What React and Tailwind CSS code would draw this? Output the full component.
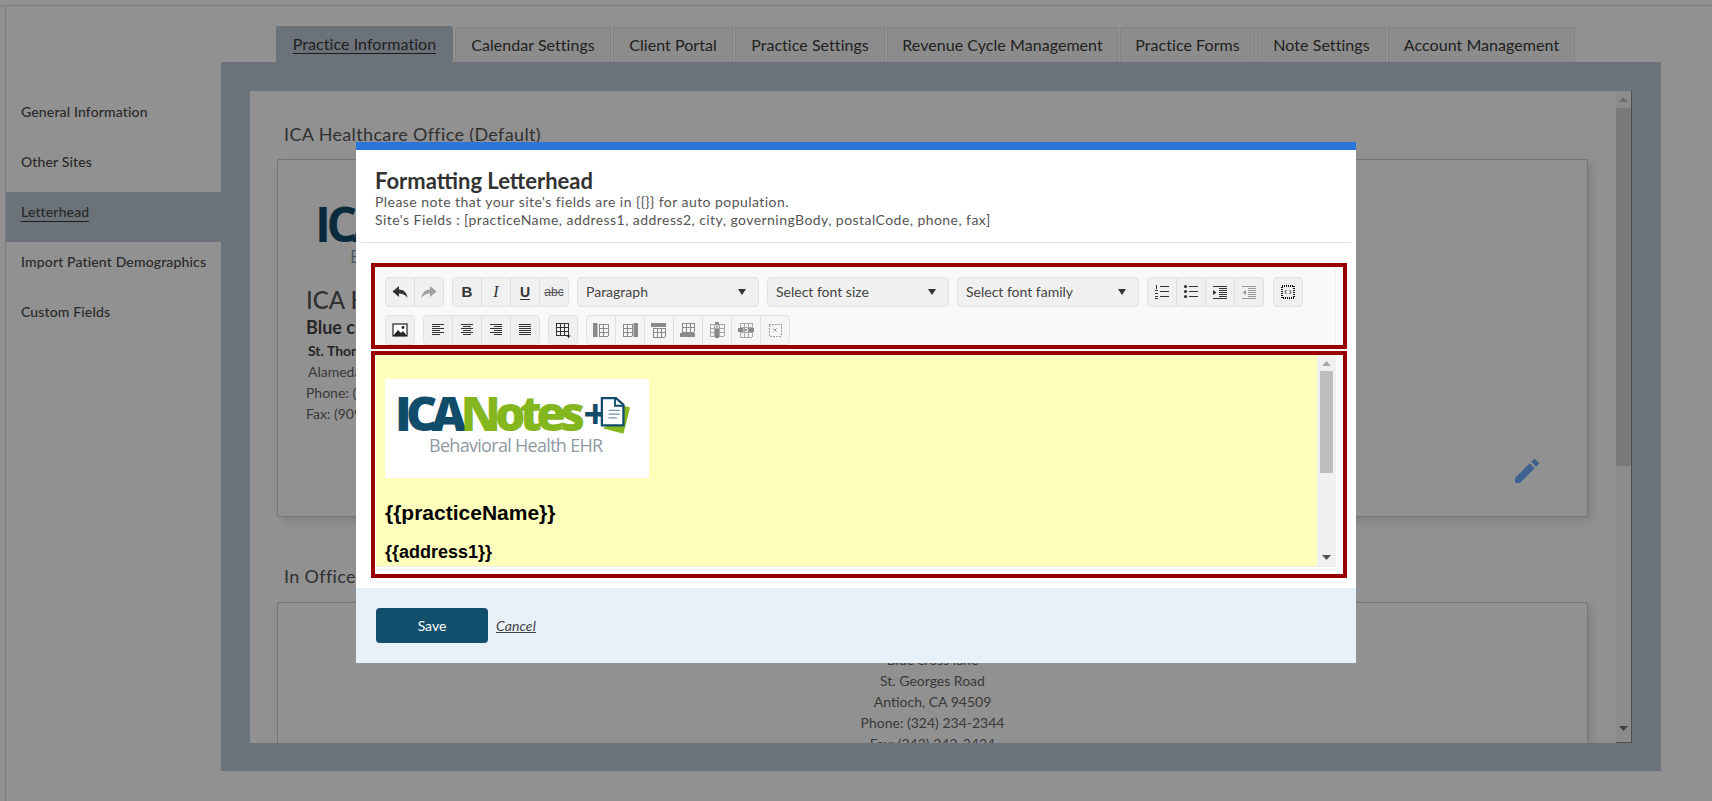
import React from "react";

const Grid = ({ x, y, w, h, cols, rows, color = "#8a8a8a" }) => {
  const lines = [];
  for (let i = 0; i <= cols; i++) lines.push(<line key={"c" + i} x1={x + (w * i) / cols} x2={x + (w * i) / cols} y1={y} y2={y + h} />);
  for (let i = 0; i <= rows; i++) lines.push(<line key={"r" + i} y1={y + (h * i) / rows} y2={y + (h * i) / rows} x1={x} x2={x + w} />);
  return <g stroke={color} strokeWidth="1" fill="none" shapeRendering="crispEdges">{lines}</g>;
};

const S = ({ children }) => <svg width="16" height="16" viewBox="0 0 16 16">{children}</svg>;
const Lines = ({ rows, color = "#333" }) => (
  <S>
    {rows.map(([x, w], i) => <rect key={i} x={x} y={2 + i * 2} width={w} height="1" fill={color} />)}
  </S>
);

const AlignLeft = () => <Lines rows={[[2, 12], [2, 8], [2, 12], [2, 8], [2, 12], [2, 8]]} />;
const AlignCenter = () => <Lines rows={[[2, 12], [4, 8], [2, 12], [4, 8], [2, 12], [4, 8]]} />;
const AlignRight = () => <Lines rows={[[2, 12], [6, 8], [2, 12], [6, 8], [2, 12], [6, 8]]} />;
const AlignJustify = () => <Lines rows={[[2, 12], [2, 12], [2, 12], [2, 12], [2, 12], [2, 12]]} />;

const Undo = () => <S><path d="M7 2 .5 7.5 7 13V9.5c3.5 0 6 1 8.5 4.5C15 9 12 5.5 7 5.5z" fill="#333" /></S>;
const Redo = () => <S><path d="M9 2l6.5 5.5L9 13V9.5c-3.5 0-6 1-8.5 4.5C1 9 4 5.5 9 5.5z" fill="#a0a0a0" /></S>;

const NumList = () => (
  <S>
    <rect x="6" y="2" width="9" height="1" fill="#333" />
    <rect x="6" y="7" width="9" height="1" fill="#333" />
    <rect x="6" y="12" width="9" height="1" fill="#333" />
    <rect x="2" y="1" width="1" height="4" fill="#333" />
    <rect x="1" y="6" width="3" height="1" fill="#333" />
    <rect x="1" y="9" width="3" height="1" fill="#333" />
    <rect x="1" y="12" width="3" height="1" fill="#333" />
    <rect x="1" y="14" width="3" height="1" fill="#333" />
  </S>
);
const BulList = () => (
  <S>
    <rect x="6" y="2" width="9" height="1" fill="#333" />
    <rect x="6" y="7" width="9" height="1" fill="#333" />
    <rect x="6" y="12" width="9" height="1" fill="#333" />
    <circle cx="2.5" cy="2.5" r="1.6" fill="#333" />
    <circle cx="2.5" cy="7.5" r="1.6" fill="#333" />
    <circle cx="2.5" cy="12.5" r="1.6" fill="#333" />
  </S>
);
const Indent = ({ color = "#333", flip = false }) => (
  <S>
    <rect x="1" y="2" width="14" height="1" fill={color} />
    <rect x="7" y="4" width="8" height="1" fill={color} />
    <rect x="7" y="6" width="8" height="1" fill={color} />
    <rect x="7" y="8" width="8" height="1" fill={color} />
    <rect x="7" y="10" width="8" height="1" fill={color} />
    <rect x="7" y="12" width="8" height="1" fill={color} />
    <rect x="1" y="14" width="14" height="1" fill={color} />
    <polygon points={flip ? "5,6 5,11 1.5,8.5" : "1,6 1,11 4.5,8.5"} fill={color} />
  </S>
);
const Code = () => (
  <S>
    <rect x="2" y="2" width="12" height="12" fill="none" stroke="#111" strokeWidth="2" strokeDasharray="1 1" shapeRendering="crispEdges" />
    <path d="M6.5 6 4.8 8l1.7 2M9.5 6l1.7 2-1.7 2" fill="none" stroke="#444" strokeWidth="1" />
  </S>
);
const Picture = () => (
  <S>
    <rect x="1" y="2" width="14" height="12" fill="#fff" stroke="#222" strokeWidth="1.2" />
    <path d="M1 14 6 8l3 3 2-2 4 5z" fill="#222" />
    <circle cx="11" cy="5.5" r="1.4" fill="#222" />
  </S>
);
const TablePlus = () => (
  <S>
    <Grid x={1} y={1} w={12} h={12} cols={3} rows={3} color="#333" />
    <path d="M13.5 12v4M11.5 14h4" stroke="#222" strokeWidth="1" />
  </S>
);
const Mark = ({ x, y }) => <path d={`M${x} ${y}l3 3M${x + 3} ${y}l-3 3`} stroke="#999" strokeWidth="1" />;
const T1 = () => <S><rect x="0" y="1" width="4.5" height="14" fill="#8a8a8a" /><Grid x={6} y={2} w={9} h={12} cols={2} rows={3} /></S>;
const T2 = () => <S><Grid x={1} y={2} w={9} h={12} cols={2} rows={3} /><rect x="11.5" y="1" width="4.5" height="14" fill="#8a8a8a" /></S>;
const T3 = () => <S><rect x="0" y="1" width="15" height="4" fill="#8a8a8a" /><Grid x={2} y={6} w={12} h={9} cols={3} rows={2} /></S>;
const T4 = () => <S><Grid x={2} y={1} w={12} h={9} cols={3} rows={2} /><rect x="0" y="11" width="15" height="4" fill="#8a8a8a" /></S>;
const T5 = () => <S><Grid x={1} y={2} w={14} h={12} cols={3} rows={3} color="#a8a8a8" /><rect x="6" y="7" width="4" height="9" fill="#8a8a8a" /><rect x="6" y="0" width="4" height="2.5" fill="#8a8a8a" /><Mark x={6.5} y={3} /></S>;
const T6 = () => <S><Grid x={2} y={1} w={12} h={14} cols={3} rows={3} color="#a8a8a8" /><rect x="0" y="6" width="5.5" height="4" fill="#8a8a8a" /><rect x="10.5" y="6" width="5.5" height="4" fill="#8a8a8a" /><Mark x={6.5} y={6.5} /></S>;
const T7 = () => <S><rect x="2" y="2" width="12" height="12" fill="none" stroke="#a0a0a0" strokeDasharray="2 1" shapeRendering="crispEdges" /><Mark x={6.5} y={6.5} /></S>;

const Btn = ({ children, last, className = "" }) => (
  <div className={`flex h-full items-center justify-center ${last ? "w-[28px]" : "w-[29px] border-r border-[#e0e0e0]"} ${className}`}>{children}</div>
);
const Group = ({ children, className = "" }) => (
  <div className={`flex h-[30px] items-stretch rounded-[4px] border border-[#e2e2e2] bg-[#f0f0f0] ${className}`}>{children}</div>
);
const Select = ({ label, width }) => (
  <div className={`flex h-[30px] items-center justify-between rounded-[4px] border border-[#e2e2e2] bg-[#f0f0f0] pl-[8px] pr-[12px] text-[14px] text-[#444] ${width}`}>
    <span className="pb-[2px]">{label}</span>
    <svg width="8" height="6" viewBox="0 0 8 6"><polygon points="0,0 8,0 4,6" fill="#333" /></svg>
  </div>
);

const Tab = ({ label, width, active }) => (
  <div className={`flex items-center justify-center rounded-t-[2px] text-[16px] tracking-[0.05px] ${width} ${active ? "h-[36px] bg-[#bcc8d6] text-[#3a3a3a]" : "mt-[1px] h-[35px] border border-b-0 border-[#e6e6e6] bg-[#f6f6f6] text-[#3a3a3a]"}`}>
    <span className={active ? "border-b border-[#333] leading-[19px]" : ""}>{label}</span>
  </div>
);

const SideItem = ({ label, active }) => (
  <div className={`flex h-[50px] items-center pb-[10px] pl-[15px] text-[14px] font-medium tracking-[0.15px] text-[#4a4a4a] ${active ? "bg-[#bcc8d6]" : ""}`}>
    <span className={`border-b leading-[19px] ${active ? "border-[#333]" : "border-transparent"}`}>{label}</span>
  </div>
);

const LogoMark = () => (
  <svg width="30" height="38" viewBox="0 0 32 40" className="-ml-[7px] mt-[6px] shrink-0">
    <polygon points="22,8 32,11 25,39 3,33 8,30" fill="#84b61e" />
    <path d="M2 1h15l8 7v22H2z" fill="#fff" stroke="#114c6b" strokeWidth="2.4" />
    <path d="M16 1v8h9" fill="none" stroke="#114c6b" strokeWidth="2" />
    <path d="M9 14h12M9 18h12M9 22h9" stroke="#6f94ad" strokeWidth="1.4" />
  </svg>
);

export default function App() {
  return (
    <div className="relative h-[801px] w-[1712px] overflow-hidden bg-white font-['Lato',sans-serif]">
      <div className="mt-[5px] h-[796px] border-t border-[#dcdcdc]">
        <div className="ml-[5px] flex h-full border-l border-[#dcdcdc]">
          <aside className="w-[215px] shrink-0 pt-[86px]">
            <SideItem label="General Information" />
            <SideItem label="Other Sites" />
            <SideItem label="Letterhead" active />
            <SideItem label="Import Patient Demographics" />
            <SideItem label="Custom Fields" />
          </aside>
          <main className="w-[1440px] shrink-0 pt-[20px]">
            <nav className="ml-[55px] flex h-[36px] gap-[2px]">
              <Tab label="Practice Information" width="w-[177px]" active />
              <Tab label="Calendar Settings" width="w-[156px]" />
              <Tab label="Client Portal" width="w-[120px]" />
              <Tab label="Practice Settings" width="w-[150px]" />
              <Tab label="Revenue Cycle Management" width="w-[231px]" />
              <Tab label="Practice Forms" width="w-[135px]" />
              <Tab label="Note Settings" width="w-[129px]" />
              <Tab label="Account Management" width="w-[187px]" />
            </nav>
            <section className="h-[709px] bg-[#bcc8d6] p-[29px] pb-[28px]">
              <div className="flex h-[652px] bg-white">
                <div className="h-full w-[1366px] overflow-hidden">
                  <div className="pl-[34px] pt-[32px] text-[18px] leading-[22px] tracking-[0.35px] text-[#555]">ICA Healthcare Office (Default)</div>
                  <div className="ml-[27px] mt-[14px] flex h-[358px] w-[1311px] rounded-[2px] border border-[#d0d0d0] shadow-[4px_4px_8px_rgba(0,0,0,0.12)]">
                    <div className="w-[330px] pl-[28px] pt-[36px] text-[14px] leading-[21px] text-[#666]">
                      <div className="pl-[9px] font-['Open_Sans',sans-serif] text-[48px] font-bold leading-[56px] tracking-[-4.5px] text-[#114c6b]">ICA</div>
                      <div className="-mt-[8px] pl-[44px] font-['Open_Sans',sans-serif] text-[18px] leading-[24px] text-[#8e9aa3]">Behavioral</div>
                      <div className="mt-[17px] text-[24px] font-medium leading-[30px] text-[#555]">ICA Healthcare</div>
                      <div className="text-[18px] font-bold leading-[24px] text-[#444]">Blue cross lane</div>
                      <div className="mt-[1px] pl-[2px] font-bold leading-[21px] text-[#444]">St. Thomas Road</div>
                      <div className="pl-[2px]">Alameda, CA</div>
                      <div>Phone: (909) 234-2344</div>
                      <div>Fax: (909) 242-2424</div>
                    </div>
                    <div className="flex flex-1 items-end justify-end pb-[29px] pr-[44px]">
                      <svg width="32" height="32" viewBox="0 0 24 24" fill="#6eaefc">
                        <path d="M3 17.25V21h3.75L17.81 9.94l-3.75-3.75L3 17.25zM20.71 7.04a1 1 0 0 0 0-1.41l-2.34-2.34a1 1 0 0 0-1.41 0l-1.83 1.83 3.75 3.75 1.83-1.83z" />
                      </svg>
                    </div>
                  </div>
                  <div className="pl-[34px] pt-[48px] text-[18px] leading-[22px] tracking-[0.35px] text-[#555]">In Office</div>
                  <div className="ml-[27px] mt-[15px] h-[400px] w-[1311px] rounded-[2px] border border-[#d0d0d0] pt-[46px] text-center text-[14px] leading-[21px] text-[#666] shadow-[4px_4px_8px_rgba(0,0,0,0.12)]">
                    <div>Blue cross lane</div>
                    <div>St. Georges Road</div>
                    <div>Antioch, CA 94509</div>
                    <div>Phone: (324) 234-2344</div>
                    <div>Fax: (242) 242-2424</div>
                  </div>
                </div>
                <div className="flex h-full w-[16px] flex-col items-center border-b border-r border-[#8a8a8a] bg-[#f6f6f6]">
                  <div className="h-[17px] pt-[6px]"><svg width="9" height="5" viewBox="0 0 9 5" className="block"><polygon points="4.5,0 9,5 0,5" fill="#c0c0c0" /></svg></div>
                  <div className="h-[358px] w-[15px] bg-[#d6d6d6]" />
                  <div className="flex-1" />
                  <div className="h-[16px]"><svg width="9" height="5" viewBox="0 0 9 5" className="block"><polygon points="0,0 9,0 4.5,5" fill="#707070" /></svg></div>
                </div>
              </div>
            </section>
          </main>
        </div>
      </div>

      <div className="absolute inset-0 flex justify-center bg-black/[0.43]">
        <div className="mt-[142px] h-[521px] w-[1000px] bg-white">
          <div className="h-[8px] bg-[#2b74db]" />
          <div className="mx-[5px] h-[93px] border-b border-[#dfdfdf] pl-[14px] pt-[18px]">
            <h2 className="text-[22px] font-bold leading-[25px] text-[#333]">Formatting Letterhead</h2>
            <p className="text-[14px] leading-[18px] tracking-[0.45px] text-[#555]">Please note that your site's fields are in {"{{}}"} for auto population.</p>
            <p className="text-[14px] leading-[18px] tracking-[0.45px] text-[#555]">Site's Fields : [practiceName, address1, address2, city, governingBody, postalCode, phone, fax]</p>
          </div>

          <div className="ml-[15px] mt-[20px] h-[86px] w-[976px] border-4 border-[#990000] bg-white pl-[1px] pr-[7px]">
            <div className="h-full border-r border-[#eeeeee] bg-[#f9f9f9] pl-[9px] pt-[10px]">
              <div className="flex h-[30px] gap-[8px]">
                <Group><Btn><Undo /></Btn><Btn last><Redo /></Btn></Group>
                <Group>
                  <Btn><span className="font-['Liberation_Sans',sans-serif] text-[15px] font-bold text-[#333]">B</span></Btn>
                  <Btn><span className="font-['Liberation_Serif',serif] text-[16px] italic text-[#333]">I</span></Btn>
                  <Btn><span className="border-b-[1.5px] border-[#333] font-['Liberation_Sans',sans-serif] text-[14px] font-bold leading-[14px] text-[#333]">U</span></Btn>
                  <Btn last><span className="font-['Liberation_Sans',sans-serif] text-[12px] text-[#555] line-through">abc</span></Btn>
                </Group>
                <Select label="Paragraph" width="w-[182px]" />
                <Select label="Select font size" width="w-[182px]" />
                <Select label="Select font family" width="w-[182px]" />
                <Group>
                  <Btn><NumList /></Btn><Btn><BulList /></Btn><Btn><Indent /></Btn><Btn last><Indent color="#999" flip /></Btn>
                </Group>
                <Group className="ml-[1px]"><Btn last><Code /></Btn></Group>
              </div>
              <div className="mt-[8px] flex h-[30px] gap-[8px]">
                <Group><Btn last><Picture /></Btn></Group>
                <Group><Btn><AlignLeft /></Btn><Btn><AlignCenter /></Btn><Btn><AlignRight /></Btn><Btn last><AlignJustify /></Btn></Group>
                <Group><Btn last><TablePlus /></Btn></Group>
                <Group className="bg-[#f5f5f5]">
                  <Btn><T1 /></Btn><Btn><T2 /></Btn><Btn><T3 /></Btn><Btn><T4 /></Btn><Btn><T5 /></Btn><Btn><T6 /></Btn><Btn last><T7 /></Btn>
                </Group>
              </div>
            </div>
          </div>

          <div className="ml-[15px] mt-[2px] h-[227px] w-[976px] border-4 border-[#990000] bg-white pl-[1px] pr-[7px] pb-[7px]">
            <div className="flex h-full border-b border-r border-[#eeeeee]">
              <div className="h-full flex-1 overflow-hidden bg-[#ffffbc] pl-[9px] pt-[24px] font-['Liberation_Sans',sans-serif] font-bold text-black">
                <div className="flex h-[99px] w-[264px] flex-col bg-white pl-[10px] pt-[6px] font-['Open_Sans',sans-serif]">
                  <div className="flex h-[56px] items-center">
                    <span className="text-[48px] font-extrabold leading-[56px] tracking-[-5.7px] text-[#114c6b]">ICA</span>
                    <span className="text-[48px] font-extrabold leading-[56px] tracking-[-5.7px] text-[#84b61e]">Notes</span>
                    <span className="ml-[4px] text-[42px] font-bold leading-[56px] text-[#114c6b]">+</span>
                    <LogoMark />
                  </div>
                  <div className="-mt-[7px] pl-[34px] text-[18px] font-normal leading-[22px] tracking-[-0.7px] text-[#8e9aa3]">Behavioral Health EHR</div>
                </div>
                <div className="mt-[22px] text-[21px] leading-[26px]">{"{{practiceName}}"}</div>
                <div className="mt-[14px] text-[18px] leading-[24px]">{"{{address1}}"}</div>
              </div>
              <div className="flex h-full w-[18px] flex-col items-center bg-[#f0f0f0]">
                <div className="h-[16px] pt-[6px]"><svg width="9" height="5" viewBox="0 0 9 5" className="block"><polygon points="4.5,0 9,5 0,5" fill="#a6a6a6" /></svg></div>
                <div className="h-[102px] w-[13px] bg-[#bdbdbd]" />
                <div className="flex-1" />
                <div className="h-[16px] pt-[5px]"><svg width="9" height="5" viewBox="0 0 9 5" className="block"><polygon points="0,0 9,0 4.5,5" fill="#505050" /></svg></div>
              </div>
            </div>
          </div>

          <div className="mt-[10px] flex h-[75px] items-start gap-[8px] bg-[#e8f0fa] pl-[20px] pt-[20px]">
            <button className="h-[35px] w-[112px] rounded-[4px] bg-[#114f6c] text-[14px] text-white">Save</button>
            <a className="mt-[8px] text-[14px] italic leading-[19px] tracking-[0.1px] text-[#444] underline">Cancel</a>
          </div>
        </div>
      </div>
    </div>
  );
}
